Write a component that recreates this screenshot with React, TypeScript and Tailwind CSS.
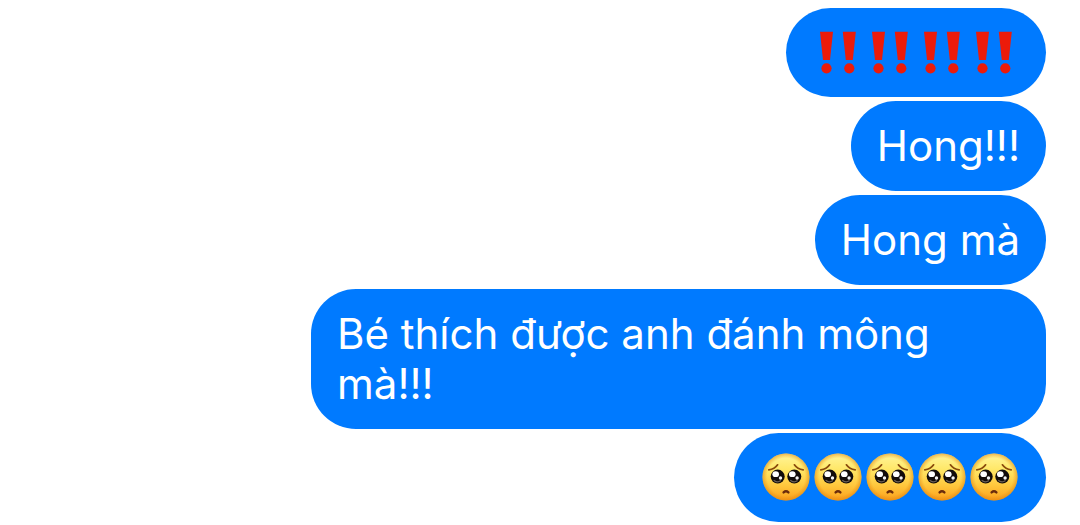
import type {ReactNode} from "react";

function DoubleBang() {
  return (
    <svg viewBox="0 0 52 49" className="h-[49px] w-[52px]" fill="#ec1b0a" role="img" aria-label="‼️">
      <path d="M8 3.8h13l-3 28.2h-7z" />
      <circle cx="14.5" cy="40.3" r="5.1" />
      <path d="M30.8 3.8h13l-3 28.2h-7z" />
      <circle cx="37.3" cy="40.3" r="5.1" />
    </svg>
  );
}

function Eye({cx}: {cx: number}) {
  return (
    <g>
      <circle cx={cx} cy="23.6" r="7" fill="#120c0a" />
      <path
        d={`M${cx - 3.6} 27.4q3.4 2.6 6.4.4`}
        fill="none"
        stroke="#6b6058"
        strokeWidth="1.3"
        strokeLinecap="round"
      />
      <ellipse cx={cx - 2} cy="21.2" rx="3.3" ry="2.9" fill="#fff" />
      <circle cx={cx + 2.8} cy="25" r="1.7" fill="#f4f4f4" />
    </g>
  );
}

function PleadingFace() {
  return (
    <svg viewBox="0 0 52 49" className="h-[49px] w-[52px]" role="img" aria-label="🥺">
      <circle cx="26" cy="24" r="23.5" fill="url(#face)" />
      <circle cx="26" cy="24" r="23.5" fill="url(#rim)" />
      <path
        d="M8.8 16.8q5.8-.6 8.8-5M43.2 16.8q-5.8-.6-8.8-5"
        fill="none"
        stroke="#8a4a0c"
        strokeWidth="1.7"
        strokeLinecap="round"
      />
      <Eye cx={17.7} />
      <Eye cx={34.3} />
      <path
        d="M23.6 39.4q2.4-2.2 4.8 0"
        fill="none"
        stroke="#6b2c0c"
        strokeWidth="2.4"
        strokeLinecap="round"
      />
    </svg>
  );
}

function EmojiGradients() {
  return (
    <svg className="absolute h-0 w-0" aria-hidden="true">
      <defs>
        <linearGradient id="face" x1="0" y1="0" x2="0" y2="1">
          <stop offset="0" stopColor="#fff59a" />
          <stop offset="0.35" stopColor="#ffe766" />
          <stop offset="0.7" stopColor="#ffc53a" />
          <stop offset="1" stopColor="#fb9f1c" />
        </linearGradient>
        <radialGradient id="rim">
          <stop offset="0.8" stopColor="#e88a10" stopOpacity="0" />
          <stop offset="1" stopColor="#dc8210" stopOpacity="0.55" />
        </radialGradient>
      </defs>
    </svg>
  );
}

function Bubble({children}: {children: ReactNode}) {
  return (
    <li className="flex max-w-[735px] flex-wrap rounded-[45px] bg-[#007aff] px-[26px] py-5">
      {children}
    </li>
  );
}

export default function App() {
  return (
    <main className="bg-white pt-2 pr-[34px] font-['Inter',sans-serif] text-[42px] leading-[50px] text-white">
      <EmojiGradients />
      <ul className="flex flex-col items-end gap-1">
        <Bubble>
          {[0, 1, 2, 3].map((i) => (
            <DoubleBang key={i} />
          ))}
        </Bubble>
        <Bubble>
          <p>Hong!!!</p>
        </Bubble>
        <Bubble>
          <p>Hong mà</p>
        </Bubble>
        <Bubble>
          <p>Bé thích được anh đánh mông mà!!!</p>
        </Bubble>
        <Bubble>
          {[0, 1, 2, 3, 4].map((i) => (
            <PleadingFace key={i} />
          ))}
        </Bubble>
      </ul>
    </main>
  );
}
